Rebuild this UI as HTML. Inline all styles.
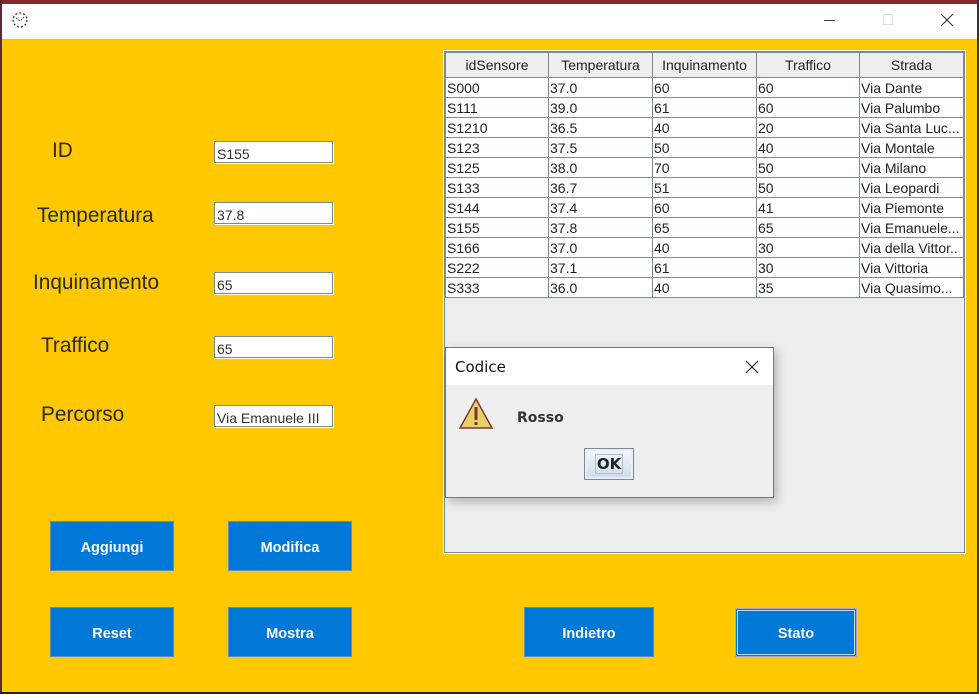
<!DOCTYPE html>
<html><head><meta charset="utf-8"><style>
*{margin:0;padding:0;box-sizing:border-box}
body{width:979px;height:694px;overflow:hidden;background:#ffc800;font-family:"Liberation Sans",sans-serif;position:relative}
.a{position:absolute}
.lbl{position:absolute;font-size:20.8px;color:#2a2a2a;line-height:20px}
.tf{position:absolute;left:214px;width:120px;height:23px;background:#fff;border:1px solid #7a8a99;border-right-color:#fff;border-bottom-color:#fff;box-shadow:inset -1px -1px 0 #7a8a99;font-size:14px;color:#333;padding:3px 0 0 2px;line-height:18px}
.btn{position:absolute;background:#0078d7;border:1px solid #5b8fc4;color:#fff;font-weight:bold;font-size:14.5px;display:flex;align-items:center;justify-content:center;padding-top:3px}
table{border-collapse:collapse;position:absolute;left:445px;top:52px;width:518px;table-layout:fixed;font-size:14px}
td,th{border:1px solid #7a8a99;height:20px;padding:0 1px;white-space:nowrap;overflow:hidden;color:#222;font-weight:normal;line-height:18px;text-align:left}
th{background:#eeeeee;height:25px;text-align:center;border-color:#7a8a99}
td{background:#fff}
</style></head><body>
<div class="a" style="left:0;top:0;width:979px;height:4px;background:#8a2630"></div>
<div class="a" style="left:0;top:4px;width:977px;height:35px;background:#fff"></div>
<div class="a" style="left:0;top:0;width:2px;height:694px;background:#5a2a30"></div>
<div class="a" style="left:977px;top:0;width:2px;height:694px;background:#333"></div>
<div class="a" style="left:0;top:692px;width:979px;height:2px;background:#222"></div>
<svg class="a" style="left:10px;top:10px" width="22" height="20"><circle cx="10" cy="10" r="7" fill="none" stroke="#333" stroke-width="1.3" stroke-dasharray="2 2"/><path d="M6 8l4 3 4-4" stroke="#333" fill="none" stroke-dasharray="1.5 1.5"/></svg>
<div class="a" style="left:824px;top:20px;width:11px;height:1px;background:#444"></div>
<div class="a" style="left:883px;top:14px;width:10px;height:11px;border:1px solid #ddd"></div>
<svg class="a" style="left:940px;top:13px" width="14" height="14"><path d="M1 1L13 13M13 1L1 13" stroke="#333" stroke-width="1.1"/></svg>

<div class="lbl" style="left:52px;top:141px">ID</div>
<div class="lbl" style="left:37px;top:206px">Temperatura</div>
<div class="lbl" style="left:33px;top:273px">Inquinamento</div>
<div class="lbl" style="left:41px;top:336px">Traffico</div>
<div class="lbl" style="left:41px;top:405px">Percorso</div>
<div class="tf" style="top:141px">S155</div>
<div class="tf" style="top:202px">37.8</div>
<div class="tf" style="top:272px">65</div>
<div class="tf" style="top:336px">65</div>
<div class="tf" style="top:405px">Via Emanuele III</div>

<div class="btn" style="left:50px;top:521px;width:124px;height:50px">Aggiungi</div>
<div class="btn" style="left:228px;top:521px;width:124px;height:50px">Modifica</div>
<div class="btn" style="left:50px;top:607px;width:124px;height:50px">Reset</div>
<div class="btn" style="left:228px;top:607px;width:124px;height:50px">Mostra</div>
<div class="btn" style="left:524px;top:607px;width:130px;height:50px">Indietro</div>
<div class="btn" style="left:735px;top:608px;width:122px;height:49px;border:1px solid #aac;box-shadow:inset 0 0 0 1px #0078d7,inset 0 0 0 2px #c8d8ea">Stato</div>

<div class="a" style="left:444px;top:51px;width:521px;height:502px;background:#eeeeee;border:1px solid #7a8a99;box-shadow:0 0 0 1px #fff"></div>
<table>
<colgroup><col style="width:103px"><col style="width:104px"><col style="width:104px"><col style="width:103px"><col style="width:104px"></colgroup>
<tr><th>idSensore</th><th>Temperatura</th><th>Inquinamento</th><th>Traffico</th><th>Strada</th></tr>
<tr><td>S000</td><td>37.0</td><td>60</td><td>60</td><td>Via Dante</td></tr>
<tr><td>S111</td><td>39.0</td><td>61</td><td>60</td><td>Via Palumbo</td></tr>
<tr><td>S1210</td><td>36.5</td><td>40</td><td>20</td><td>Via Santa Luc...</td></tr>
<tr><td>S123</td><td>37.5</td><td>50</td><td>40</td><td>Via Montale</td></tr>
<tr><td>S125</td><td>38.0</td><td>70</td><td>50</td><td>Via Milano</td></tr>
<tr><td>S133</td><td>36.7</td><td>51</td><td>50</td><td>Via Leopardi</td></tr>
<tr><td>S144</td><td>37.4</td><td>60</td><td>41</td><td>Via Piemonte</td></tr>
<tr><td>S155</td><td>37.8</td><td>65</td><td>65</td><td>Via Emanuele...</td></tr>
<tr><td>S166</td><td>37.0</td><td>40</td><td>30</td><td>Via della Vittor..</td></tr>
<tr><td>S222</td><td>37.1</td><td>61</td><td>30</td><td>Via Vittoria</td></tr>
<tr><td>S333</td><td>36.0</td><td>40</td><td>35</td><td>Via Quasimo...</td></tr>
</table>

<div class="a" style="left:445px;top:347px;width:329px;height:151px;background:#eeeeee;border:1px solid #777;box-shadow:3px 4px 10px rgba(0,0,0,0.25)">
 <div class="a" style="left:0;top:0;width:327px;height:37px;background:#fff"></div>
 <div class="a" style="left:9px;top:10px;font-size:15px;color:#111;font-family:'DejaVu Sans',sans-serif">Codice</div>
 <svg class="a" style="left:299px;top:12px" width="14" height="14"><path d="M1 1L13 13M13 1L1 13" stroke="#222" stroke-width="1.2"/></svg>
 <svg class="a" style="left:13px;top:49px" width="36" height="36"><polygon points="17,2 33,31 1,31" fill="#e9cf6a" stroke="#7a3a2a" stroke-width="1.5"/><rect x="15.5" y="10" width="3" height="13" fill="#7a3a2a"/><rect x="15.5" y="25" width="3" height="3" fill="#7a3a2a"/></svg>
 <div class="a" style="left:71px;top:62px;font-size:14px;font-weight:bold;color:#333;font-family:'DejaVu Sans',sans-serif">Rosso</div>
 <div class="a" style="left:138px;top:100px;width:50px;height:32px;border:1px solid #7a8a99;background:linear-gradient(#f4f7fb,#cfdbe8);box-shadow:inset 0 0 0 2px #e8eef5;display:flex;align-items:center;justify-content:center;font-weight:bold;font-size:15px;color:#222;font-family:'DejaVu Sans',sans-serif"><span style="border:1px solid #a8c0d8;padding:0 1px">OK</span></div>
</div>
</body></html>
